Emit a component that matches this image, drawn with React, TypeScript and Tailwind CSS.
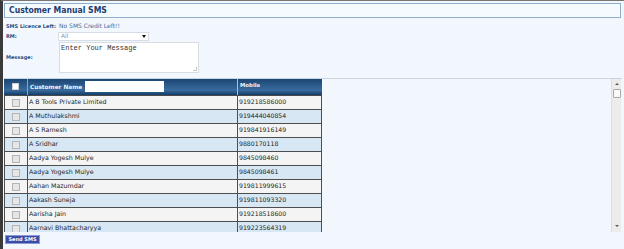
import React from "react";

const rows: [string, string][] = [
  ["A B Tools Private Limited", "919218586000"],
  ["A Muthulakshmi", "919444040854"],
  ["A S Ramesh", "919841916149"],
  ["A Sridhar", "9880170118"],
  ["Aadya Yogesh Mulye", "9845098460"],
  ["Aadya Yogesh Mulye", "9845098461"],
  ["Aahan Mazumdar", "919811999615"],
  ["Aakash Suneja", "919811093320"],
  ["Aarisha Jain", "919218518600"],
  ["Aarnavi Bhattacharyya", "919223564319"],
];

export default function App() {
  return (
    <div
      className="w-[624px] h-[249px] overflow-hidden bg-[#f1f7fc] border-l-[3px] border-l-[#3a3a3a] border-t border-t-[#777777] flex flex-col"
      style={{ fontFamily: '"DejaVu Sans", Verdana, sans-serif' }}
    >
      {/* Title */}
      <div className="mt-[2px] ml-[1px] w-[617px] h-[15px] shrink-0 border border-[#8fadcc] bg-[#f5faff] flex items-center pl-[4px]">
        <span
          className="text-[8.6px] font-bold text-[#1f3d6f] leading-none"
          style={{ fontFamily: '"DejaVu Sans Condensed", "DejaVu Sans", sans-serif' }}
        >
          Customer Manual SMS
        </span>
      </div>

      {/* Form */}
      <div className="mt-[3px] pl-[3px] grid grid-cols-[53px_auto] items-center">
        <div className="h-[10px] flex items-center text-[5px] font-bold text-[#2c4d7e] leading-none">SMS Licence Left:</div>
        <div className="h-[10px] flex items-center text-[6px] text-[#4a6a98] leading-none">No SMS Credit Left!!</div>

        <div className="h-[10px] flex items-center text-[5px] font-bold text-[#2c4d7e] leading-none">RM:</div>
        <div className="h-[10px] flex items-center">
          <div className="w-[91px] h-[9px] bg-white border border-[#d6dde4] flex items-center justify-between pl-[2px] pr-[2px] -ml-[1px]">
            <span className="text-[6px] text-[#8a97a6] leading-none">All</span>
            <span className="w-0 h-0 border-l-[2px] border-r-[2px] border-t-[3px] border-l-transparent border-r-transparent border-t-[#111111]" />
          </div>
        </div>

        <div className="h-[33px] flex items-center text-[5px] font-bold text-[#2c4d7e] leading-none">Message:</div>
        <div className="h-[33px] flex items-center">
          <div className="relative w-[140px] h-[31px] bg-white border border-[#d8dde3]">
            <textarea
              defaultValue="Enter Your Message"
              className="w-full h-full resize-none outline-none px-[1px] pt-[1px] text-[7px] leading-[8px] text-[#333333] bg-transparent"
              style={{ fontFamily: '"Liberation Mono", "Courier New", monospace' }}
            />
            <div className="absolute right-[1px] bottom-[1px] w-[4px] h-[4px] border-r border-b border-[#c8c8c8]" />
          </div>
        </div>
      </div>

      {/* Grid container */}
      <div className="mt-[4px] ml-[1px] w-[618px] h-[154px] shrink-0 border-t border-t-[#c9d4de] flex overflow-hidden">
        <div className="w-[318px] shrink-0 flex flex-col">
          {/* Header */}
          <div className="h-[17px] shrink-0 flex border-b border-[#4a4a4a] bg-[linear-gradient(to_bottom,#1b4674_0%,#2e5d8e_45%,#3a6b9c_70%,#123c69_100%)]">
            <div className="w-[24px] shrink-0 flex items-start justify-center pt-[4px] border-r border-[#8aa6c2]">
              <div className="w-[7px] h-[7px] bg-white border border-[#c8d0d8]" />
            </div>
            <div className="w-[210px] shrink-0 flex items-start pt-[2px] pl-[2px] gap-[2px] border-r border-[#a9c0d6]">
              <span className="text-[5.8px] font-bold text-[#eef3f8] leading-none mt-[4px]">Customer Name</span>
              <div className="w-[79px] h-[11px] bg-white ml-[1px]" />
            </div>
            <div className="w-[84px] shrink-0 flex items-start pt-[4px] pl-[2px]">
              <span className="text-[5.4px] font-bold text-[#eef3f8] leading-none">Mobile</span>
            </div>
          </div>
          {/* Rows */}
          {rows.map(([name, mobile], i) => (
            <div
              key={i}
              className={`h-[14px] shrink-0 flex border-b border-l border-[#4e4e4e] ${i % 2 === 0 ? "bg-[#f4f4f4]" : "bg-[#d8e7f4]"}`}
            >
              <div className="w-[23px] shrink-0 flex items-center justify-center border-r border-[#4e4e4e]">
                <div className="w-[8px] h-[8px] bg-[#e6e6e6] border border-[#b4b4b4]" />
              </div>
              <div className="w-[210px] shrink-0 flex items-center pl-[1px] border-r border-[#4e4e4e]">
                <span className="text-[6.3px] text-[#1e1e1e] leading-none whitespace-nowrap">{name}</span>
              </div>
              <div className="w-[84px] shrink-0 flex items-center pl-[1px] border-r border-[#4e4e4e]">
                <span className="text-[6.2px] text-[#1e1e1e] leading-none">{mobile}</span>
              </div>
            </div>
          ))}
        </div>
        <div className="flex-1" />
        {/* Scrollbar */}
        <div className="w-[10px] shrink-0 bg-[#ececec] border-l border-[#dedede] flex flex-col items-center mr-[1px]">
          <div className="mt-[4px] w-0 h-0 border-l-[2px] border-r-[2px] border-b-[2px] border-l-transparent border-r-transparent border-b-[#555555]" />
          <div className="mt-[4px] w-[8px] h-[9px] bg-[#fafafa] border border-[#a8a8a8] rounded-[1px]" />
          <div className="flex-1" />
          <div className="mb-[5px] w-0 h-0 border-l-[2px] border-r-[2px] border-t-[2px] border-l-transparent border-r-transparent border-t-[#555555]" />
        </div>
      </div>

      {/* Send SMS */}
      <div className="mt-[3px] ml-[2px]">
        <button className="w-[35px] h-[9px] bg-[#3a4da6] border border-[#8c98d6] text-white text-[5px] font-bold leading-none flex items-center justify-center">
          Send SMS
        </button>
      </div>
    </div>
  );
}
